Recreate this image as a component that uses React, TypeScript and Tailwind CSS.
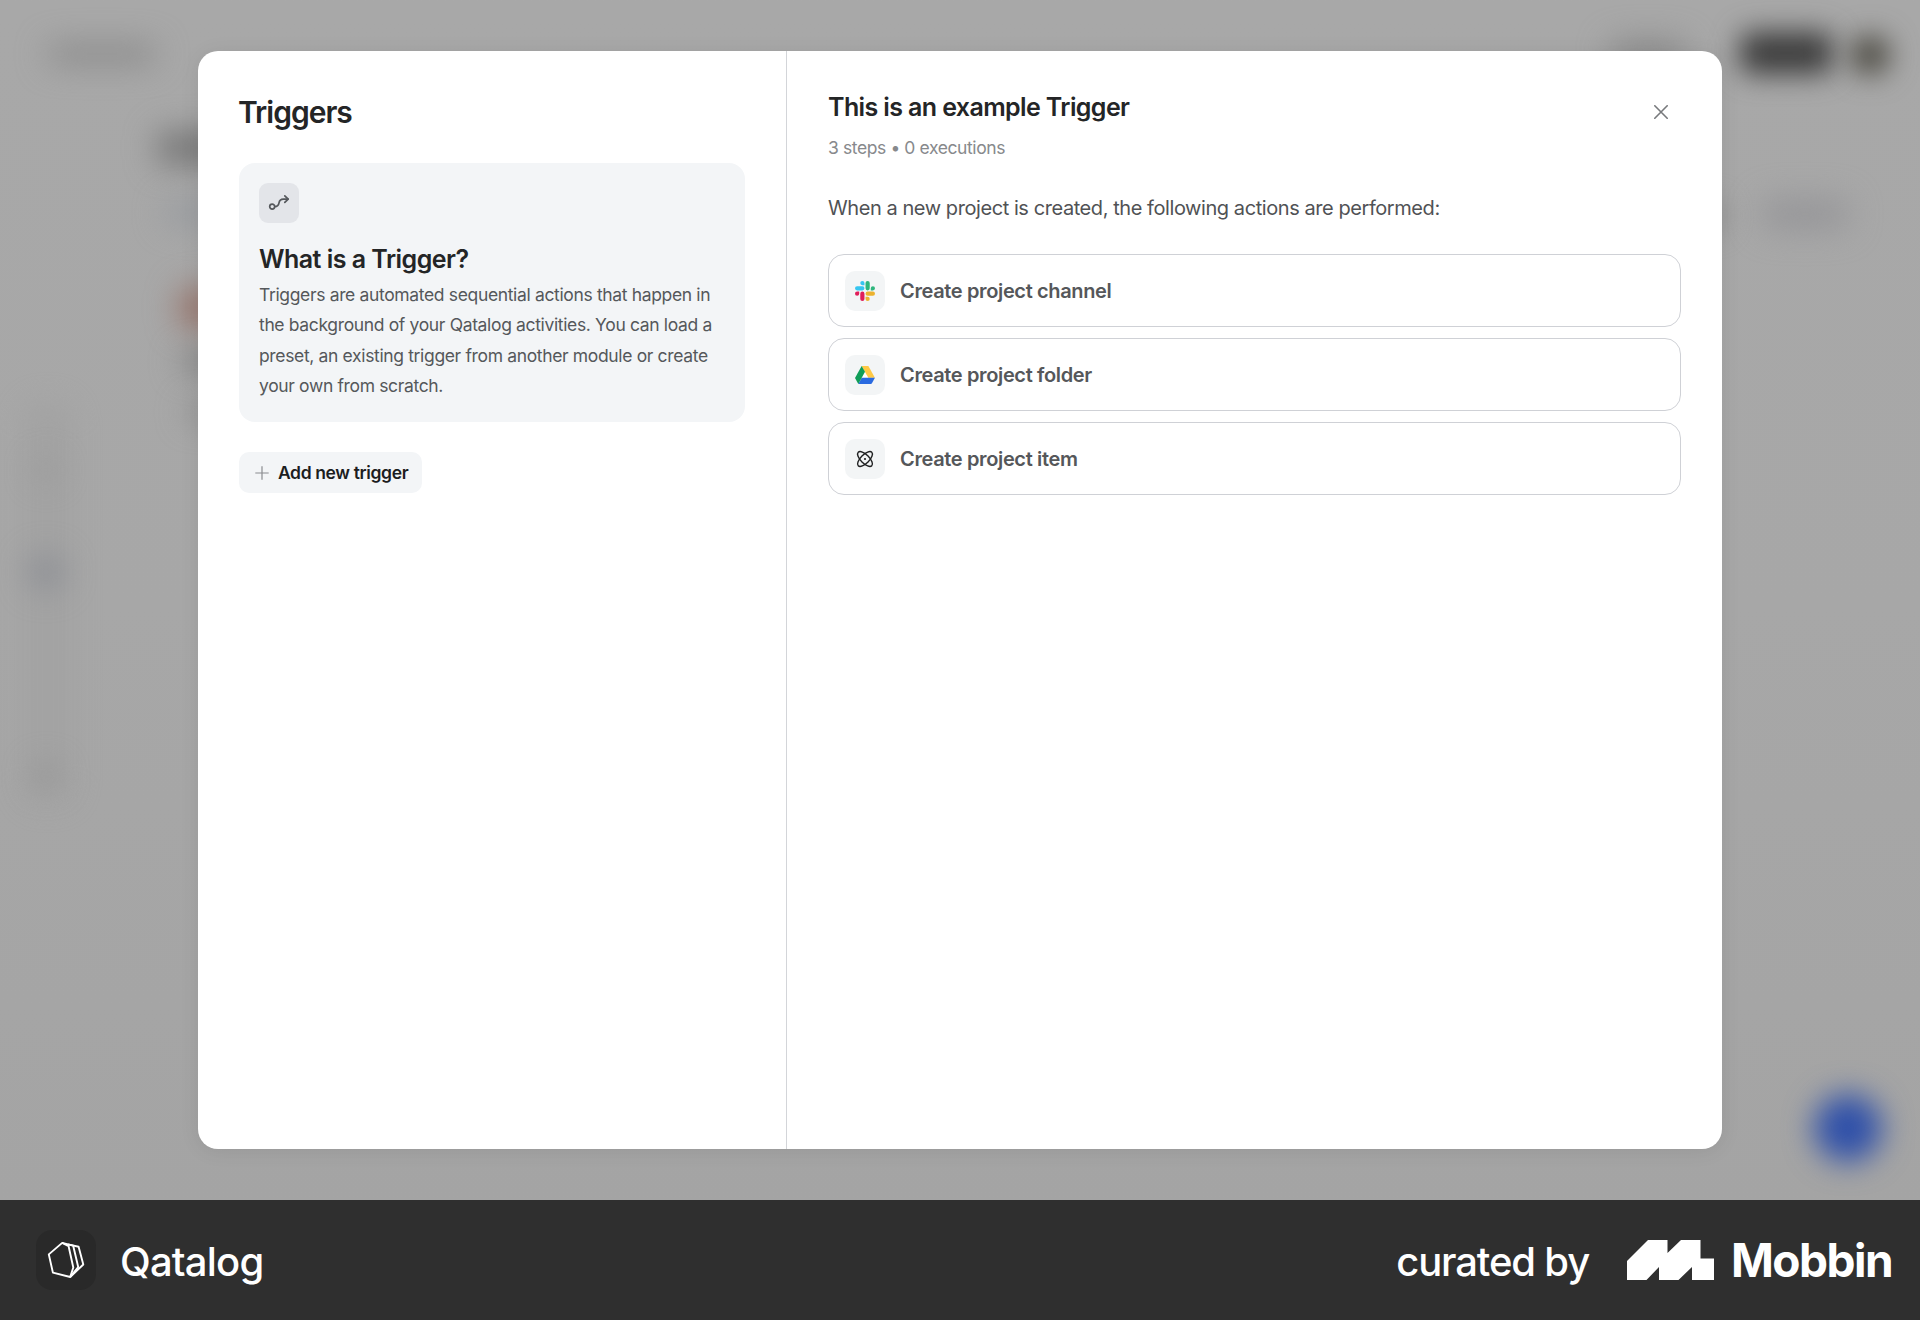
import React from "react";

function SlackLogo() {
  return (
    <svg width="20" height="20" viewBox="0 0 24 24">
      <path fill="#E01E5A" d="M5.042 15.165a2.528 2.528 0 0 1-2.52 2.523A2.528 2.528 0 0 1 0 15.165a2.527 2.527 0 0 1 2.522-2.52h2.52v2.52zM6.313 15.165a2.527 2.527 0 0 1 2.521-2.52 2.527 2.527 0 0 1 2.521 2.52v6.313A2.528 2.528 0 0 1 8.834 24a2.528 2.528 0 0 1-2.521-2.522v-6.313z" />
      <path fill="#36C5F0" d="M8.834 5.042a2.528 2.528 0 0 1-2.521-2.52A2.528 2.528 0 0 1 8.834 0a2.528 2.528 0 0 1 2.521 2.522v2.52H8.834zM8.834 6.313a2.528 2.528 0 0 1 2.521 2.521 2.528 2.528 0 0 1-2.521 2.521H2.522A2.528 2.528 0 0 1 0 8.834a2.528 2.528 0 0 1 2.522-2.521h6.312z" />
      <path fill="#2EB67D" d="M18.956 8.834a2.528 2.528 0 0 1 2.522-2.521A2.528 2.528 0 0 1 24 8.834a2.528 2.528 0 0 1-2.522 2.521h-2.522V8.834zM17.688 8.834a2.528 2.528 0 0 1-2.523 2.521 2.527 2.527 0 0 1-2.52-2.521V2.522A2.527 2.527 0 0 1 15.165 0a2.528 2.528 0 0 1 2.523 2.522v6.312z" />
      <path fill="#ECB22E" d="M15.165 18.956a2.528 2.528 0 0 1 2.523 2.522A2.528 2.528 0 0 1 15.165 24a2.527 2.527 0 0 1-2.52-2.522v-2.522h2.52zM15.165 17.688a2.527 2.527 0 0 1-2.52-2.523 2.526 2.526 0 0 1 2.52-2.52h6.313A2.527 2.527 0 0 1 24 15.165a2.528 2.528 0 0 1-2.522 2.523h-6.313z" />
    </svg>
  );
}

function DriveLogo() {
  return (
    <svg width="20" height="18" viewBox="0 0 87.3 78">
      <path fill="#fff" d="M43.65 25 L58.5 50.8 H29 Z" />
      <path fill="#ffc944" d="M29 0 H58.5 L86.8 50.8 H58.3 Z" />
      <path fill="#2a6ae0" d="M29.2 50.8 H87 L74 75 Q72 78 69 78 H14.5 Z" />
      <path fill="#0f9d58" d="M29 0 L43.65 25 L14.5 77.8 L0 52.5 Z" />
    </svg>
  );
}

function AtomIcon() {
  return (
    <svg width="18" height="18" viewBox="0 0 18 18" fill="none" stroke="#1f2021" strokeWidth="1.4">
      <ellipse cx="9" cy="9" rx="9.6" ry="4.3" transform="rotate(45 9 9)" />
      <ellipse cx="9" cy="9" rx="9.6" ry="4.3" transform="rotate(-45 9 9)" />
      <circle cx="9" cy="9" r="1.1" fill="#1f2021" stroke="none" />
    </svg>
  );
}

function RouteIcon() {
  return (
    <svg width="22" height="20" viewBox="0 0 22 20" fill="none" stroke="#55585c" strokeWidth="1.7" strokeLinecap="round" strokeLinejoin="round">
      <circle cx="4.2" cy="13.6" r="2.5" />
      <path d="M6.9 13.6 C9.8 13.6 10.6 12.2 11 9.9 C11.4 7.4 12.6 6.2 15.4 6.1 H20" />
      <path d="M16.8 2.8 L20.2 6.1 L16.8 9.4" />
    </svg>
  );
}

function QatalogMark() {
  return (
    <svg width="60" height="60" viewBox="0 0 60 60" fill="none" stroke="#fff" strokeWidth="1.9" strokeLinejoin="round">
      <path d="M26.2 12.9 L12.8 24.4 L16.9 42.6 L34.2 47 L37.3 37.5 L32.6 16.2 Z" />
      <path d="M26.2 12.9 L37.2 15.7 L42.2 37 L34.2 47" />
      <path d="M32 14.4 L42.6 16.8 L47.3 34.5 L34.2 47" />
    </svg>
  );
}

function MobbinMark() {
  return (
    <svg width="87" height="40" viewBox="0 0 87 40" fill="#fff">
      <path d="M0 21 L21 0 H40.5 V13 L54 0 H73.5 V18.5 H87 V40 H65 V27 L51.5 40 H32 V27 L19.5 40 H0 Z" />
    </svg>
  );
}

function Backdrop() {
  return (
    <div className="absolute inset-0 overflow-hidden bg-linear-to-b from-[#a8a8a8] via-[#a7a7a7] to-[#a4a4a4]">
      <div className="absolute top-[46px] left-[48px] h-4 w-[108px] rounded-full bg-[#838383] blur-[16px]" />
      <div className="absolute top-[132px] left-[158px] h-8 w-[120px] rounded-lg bg-[#747474] blur-[16px]" />
      <div className="absolute top-[201px] left-[164px] h-6 w-[80px] rounded-full bg-[#989b9f] blur-[15px]" />
      <div className="absolute top-[288px] left-[180px] size-10 rounded-lg bg-[#967167] blur-[16px]" />
      <div className="absolute top-[352px] left-[180px] h-5 w-[80px] rounded-full bg-[#808080] blur-[15px]" />
      <div className="absolute top-[404px] left-[186px] h-4 w-[80px] rounded-full bg-[#8b8b8b] blur-[15px]" />
      <div className="absolute top-[400px] left-[22px] h-[405px] w-[52px] rounded-3xl bg-[#a3a3a3] blur-[12px]" />
      <div className="absolute top-[456px] left-[32px] size-7 rounded-full bg-[#9e9e9e] blur-[13px]" />
      <div className="absolute top-[554px] left-[28px] size-9 rounded-full bg-[#8e9095] blur-[15px]" />
      <div className="absolute top-[762px] left-[32px] size-7 rounded-full bg-[#989898] blur-[14px]" />
      <div className="absolute top-[42px] left-[1610px] h-6 w-[76px] rounded-full bg-[#858585] blur-[16px]" />
      <div className="absolute top-[32px] left-[1740px] h-[42px] w-[93px] rounded-xl bg-[#3c3c3c] blur-[14px]" />
      <div className="absolute top-[35px] left-[1850px] size-10 rounded-full bg-[#4c4a42] blur-[14px]" />
      <div className="absolute top-[200px] left-[1762px] h-7 w-[86px] rounded-xl bg-[#949497] blur-[16px]" />
      <div className="absolute top-[200px] left-[1690px] h-8 w-9 rounded-xl bg-[#939393] blur-[12px]" />
      <div className="absolute top-[1094px] left-[1814px] size-[68px] rounded-full bg-[#2f50a9] blur-[15px]" />
    </div>
  );
}

function TriggerList() {
  return (
    <section className="flex w-[589px] flex-col items-start border-r border-[#d3d5d9] pt-[41px] pl-[41px]">
      <h1 className="-ml-px text-[30px] leading-10 font-semibold tracking-[-1px] text-[#242526]">Triggers</h1>
      <article className="mt-[31px] h-[259px] w-[506px] rounded-2xl bg-[#f3f5f7] px-5 pt-5">
        <div className="flex size-10 items-center justify-center rounded-[9px] bg-[#e3e5e9]">
          <RouteIcon />
        </div>
        <h2 className="mt-5 text-[25px] leading-8 font-semibold tracking-[-0.52px] text-[#242526]">What is a Trigger?</h2>
        <p className="mt-[5px] text-[17.5px] leading-[30.4px] tracking-[-0.35px] whitespace-nowrap text-[#55585b]">
          Triggers are automated sequential actions that happen in
          <br />
          the background of your Qatalog activities. You can load a
          <br />
          preset, an existing trigger from another module or create
          <br />
          your own from scratch.
        </p>
      </article>
      <button className="mt-[30px] flex h-[41px] w-[183px] items-center gap-[9px] rounded-[10px] bg-[#f3f5f7] pl-4">
        <svg width="14" height="14" viewBox="0 0 14 14" stroke="#8a8c8f" strokeWidth="1.2">
          <path d="M7 0.3 V13.7 M0.3 7 H13.7" />
        </svg>
        <span className="text-[17.5px] leading-6 font-semibold tracking-[-0.36px] whitespace-nowrap text-[#1c1d1e]">Add new trigger</span>
      </button>
    </section>
  );
}

const steps = [
  { label: "Create project channel", icon: <SlackLogo /> },
  { label: "Create project folder", icon: <DriveLogo /> },
  { label: "Create project item", icon: <AtomIcon /> },
];

function TriggerDetails() {
  return (
    <section className="flex-1 px-[41px] pt-10">
      <header className="flex items-start justify-between">
        <div>
          <h2 className="text-[25px] leading-8 font-semibold tracking-[-0.61px] text-[#242526]">This is an example Trigger</h2>
          <p className="mt-[13px] text-[17.5px] leading-6 tracking-[-0.4px] text-[#87898c]">3 steps • 0 executions</p>
        </div>
        <button aria-label="Close" className="mt-[14px] mr-[13px]">
          <svg width="14" height="14" viewBox="0 0 14 14" stroke="#77797c" strokeWidth="1.6" strokeLinecap="round">
            <path d="M0.8 0.8 L13.2 13.2 M13.2 0.8 L0.8 13.2" />
          </svg>
        </button>
      </header>
      <p className="mt-[33px] text-[20px] leading-[30px] tracking-[-0.43px] text-[#505255]">
        When a new project is created, the following actions are performed:
      </p>
      <ul className="mt-[31px] flex flex-col gap-[11px]">
        {steps.map((step) => (
          <li key={step.label} className="flex h-[73px] items-center gap-[15px] rounded-2xl border border-[#cfd1d6] pl-4">
            <div className="flex size-10 items-center justify-center rounded-[10px] bg-[#f3f5f6]">{step.icon}</div>
            <span className="text-[20px] leading-6 font-semibold tracking-[-0.36px] text-[#55575a]">{step.label}</span>
          </li>
        ))}
      </ul>
    </section>
  );
}

export default function App() {
  return (
    <div className="flex h-[1320px] w-[1920px] flex-col overflow-hidden font-['Inter',sans-serif]">
      <main className="relative h-[1200px] px-[198px] pt-[51px]">
        <Backdrop />
        <div className="relative flex h-[1098px] w-[1524px] rounded-[20px] bg-white shadow-[0_2px_20px_rgba(0,0,0,0.08)]">
          <TriggerList />
          <TriggerDetails />
        </div>
      </main>
      <footer className="relative flex h-[120px] items-center bg-[#2f2f2f] text-white">
        <div className="ml-9 size-[60px] rounded-2xl bg-[#292929]">
          <QatalogMark />
        </div>
        <span className="mt-[3px] ml-6 text-[40px] leading-[56px] font-medium tracking-[-0.8px]">Qatalog</span>
        <div className="ml-auto flex items-center pr-[29px]">
          <span className="mt-[3px] text-[40px] leading-[56px] font-medium tracking-[-1.15px]">curated by</span>
          <div className="ml-[38px]">
            <MobbinMark />
          </div>
          <span className="ml-[17px] w-40 text-[46px] leading-[56px] font-bold tracking-[-1.5px]">Mobbin</span>
        </div>
      </footer>
    </div>
  );
}
